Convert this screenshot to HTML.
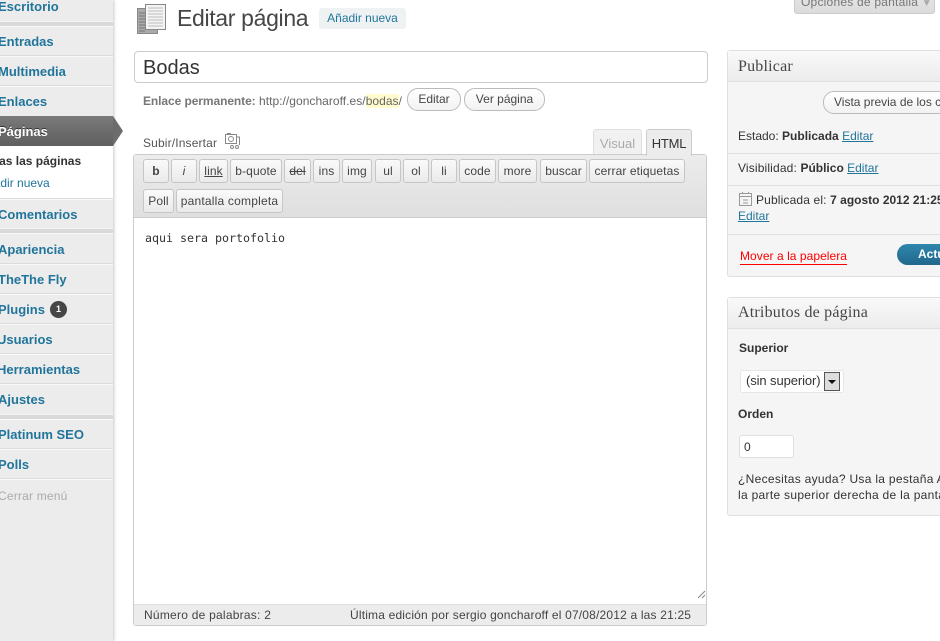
<!DOCTYPE html>
<html><head><meta charset="utf-8"><style>
*{box-sizing:border-box}
html,body{margin:0;padding:0;width:940px;height:641px;overflow:hidden;background:#fff;font:12px "Liberation Sans",sans-serif;color:#333}
.a{position:absolute;white-space:nowrap}
#side{left:0;top:0;width:113px;height:641px;background:#ececec;box-shadow:1px 0 3px rgba(0,0,0,.22)}
.m{position:absolute;left:-2px;font:bold 13px/16px "Liberation Sans",sans-serif;color:#21759b;white-space:nowrap}
.l{position:absolute;left:0;width:113px;height:2px;background:linear-gradient(#dcdcdc 50%,#f9f9f9 50%)}
.s{position:absolute;left:0;width:113px;height:6px;background:#d9d9d9;border-top:1px solid #f5f5f5;border-bottom:1px solid #f9f9f9}
.b{position:absolute;height:24px;top:0;background:linear-gradient(#fafafa,#eaeaea);border:1px solid #c6c6c6;border-radius:3px;font:12px/22px "Liberation Sans",sans-serif;letter-spacing:.1px;text-align:center;color:#444}
.pill{position:absolute;height:23px;border:1px solid #bbb;border-radius:11px;background:linear-gradient(#fff,#f2f2f2);font:12px/21px "Liberation Sans",sans-serif;text-align:center;color:#464646;white-space:nowrap}
a{color:#21759b;text-decoration:underline}
.box{position:absolute;left:727px;width:230px;background:#f5f5f5;border:1px solid #dfdfdf;border-radius:3px}
.hd{position:absolute;left:0;top:0;width:100%;height:30px;background:linear-gradient(#f9f9f9,#ececec);border-bottom:1px solid #dfdfdf;font:16px/31px "Liberation Serif",serif;letter-spacing:.2px;padding-left:10px;color:#464646}
.hr{position:absolute;left:0;width:100%;height:1px;background:#dfdfdf}
</style></head><body>

<div class="a" id="side"></div>
<div class="m" style="top:-1px">Escritorio</div>
<div class="s" style="top:21px"></div>
<div class="m" style="top:34px">Entradas</div>
<div class="l" style="top:55px"></div>
<div class="m" style="top:64px">Multimedia</div>
<div class="l" style="top:85px"></div>
<div class="m" style="top:94px">Enlaces</div>
<div class="a" style="left:0;top:146px;width:113px;height:52px;background:#fff"></div>
<div class="a" style="left:0;top:116px;width:113px;height:30px;background:linear-gradient(#7a7a7a,#5f5f5f)"></div>
<svg class="a" style="left:113px;top:116px" width="10" height="30"><path d="M0 0L10 15L0 30Z" fill="#6c6c6c"/></svg>
<div class="m" style="top:124px;color:#fff;text-shadow:0 -1px 0 #333">Páginas</div>
<div class="a" style="left:-22px;top:153px;font:bold 12px/16px 'Liberation Sans',sans-serif;color:#333">Todas las páginas</div>
<div class="a" style="left:-21px;top:175px;font:12px/16px 'Liberation Sans',sans-serif;color:#21759b">Añadir nueva</div>
<div class="l" style="top:198px"></div>
<div class="m" style="top:207px">Comentarios</div>
<div class="s" style="top:228px"></div>
<div class="m" style="top:242px">Apariencia</div>
<div class="l" style="top:263px"></div>
<div class="m" style="top:272px">TheThe Fly</div>
<div class="l" style="top:293px"></div>
<div class="m" style="top:302px">Plugins</div>
<div class="a" style="left:50px;top:301px;width:17px;height:17px;border-radius:50%;background:#464646;color:#fff;font:bold 9px/17px 'Liberation Sans',sans-serif;text-align:center">1</div>
<div class="l" style="top:323px"></div>
<div class="m" style="top:332px;left:-3px">Usuarios</div>
<div class="l" style="top:353px"></div>
<div class="m" style="top:362px;left:-3px">Herramientas</div>
<div class="l" style="top:383px"></div>
<div class="m" style="top:392px">Ajustes</div>
<div class="s" style="top:414px"></div>
<div class="m" style="top:427px">Platinum SEO</div>
<div class="l" style="top:448px"></div>
<div class="m" style="top:457px">Polls</div>
<div class="l" style="top:478px"></div>
<div class="a" style="left:-2px;top:488px;font:12px/16px 'Liberation Sans',sans-serif;letter-spacing:.2px;color:#aaa">Cerrar menú</div>

<svg class="a" style="left:136px;top:3px" width="34" height="33">
<rect x="1.500" y="5.500" width="20" height="25" fill="#aaa" stroke="#888"/>
<g stroke="#777"><path d="M3 10H9M3 13H9M3 16H9M3 19H9M3 22H9M3 25H9M3 28H9"/></g>
<rect x="9.500" y="1.500" width="20" height="25" fill="#f4f4f4" stroke="#888"/>
<g stroke="#bbb"><path d="M12 5H27M12 8H27M12 11H27M12 14H27M12 17H27M12 20H27M12 23H27"/></g>
</svg>
<div class="a" style="left:177px;top:3px;font:23px/30px 'Liberation Sans',sans-serif;letter-spacing:-.33px;color:#464646">Editar página</div>
<div class="a" style="left:319px;top:8px;width:87px;height:21px;background:#eef2f3;border-radius:3px;font:12px/21px 'Liberation Sans',sans-serif;color:#21759b;text-align:center">Añadir nueva</div>
<div class="a" style="left:794px;top:-10px;width:141px;height:24px;background:linear-gradient(#e6e6e6,#dcdcdc);border:1px solid #ccc;border-radius:3px;font:12px/22px 'Liberation Sans',sans-serif;letter-spacing:.22px;color:#777;padding-left:6px">Opciones de pantalla <span style="color:#aaa;font-size:10px">▼</span></div>

<div class="a" style="left:134px;top:51px;width:574px;height:32px;background:#fff;border:1px solid #ccc;border-radius:4px;font:20px/32px 'Liberation Sans',sans-serif;color:#333;padding-left:8px">Bodas</div>
<div class="a" style="left:143px;top:93px;font:12px/16px 'Liberation Sans',sans-serif;letter-spacing:.04px;color:#666"><b style="color:#777;letter-spacing:-.08px">Enlace permanente:</b> http://goncharoff.es/<span style="background:#fffbcc">bodas</span>/</div>
<div class="pill" style="left:407px;top:88px;width:54px">Editar</div>
<div class="pill" style="left:464px;top:88px;width:81px">Ver página</div>

<div class="a" style="left:143px;top:135px;font:12px/16px 'Liberation Sans',sans-serif;letter-spacing:.15px;color:#555">Subir/Insertar</div>
<svg class="a" style="left:224px;top:132px" width="17" height="18" fill="none" stroke="#888">
<rect x="1.500" y="2.500" width="11" height="9"/><circle cx="7" cy="7" r="2.500"/><path d="M3 1.500H7M12.500 5H15.500V13"/><circle cx="8" cy="15" r="1.500"/><circle cx="13" cy="15" r="1.500"/>
</svg>

<div class="a" style="left:593px;top:129px;width:49px;height:26px;background:#f1f1f1;border:1px solid #dfdfdf;border-bottom:0;border-radius:3px 3px 0 0;font:13px/27px 'Liberation Sans',sans-serif;color:#aaa;text-align:center">Visual</div>
<div class="a" style="left:646px;top:129px;width:46px;height:27px;background:#ececec;border:1px solid #ccc;border-bottom:0;border-radius:3px 3px 0 0;font:13px/27px 'Liberation Sans',sans-serif;letter-spacing:-.2px;color:#333;text-align:center;z-index:2">HTML</div>

<div class="a" style="left:133px;top:154px;width:574px;height:472px;background:#fff;border:1px solid #ccc;border-radius:3px"></div>
<div class="a" style="left:134px;top:155px;width:572px;height:63px;background:linear-gradient(#ececec,#dfdfdf);border-bottom:1px solid #ccc;border-radius:3px 3px 0 0"></div>
<div class="a" style="left:0;top:159px;width:0;height:0">
<div class="b" style="left:143px;width:26px"><b>b</b></div>
<div class="b" style="left:171px;width:26px"><i>i</i></div>
<div class="b" style="left:199px;width:29px"><u>link</u></div>
<div class="b" style="left:230px;width:52px">b-quote</div>
<div class="b" style="left:284px;width:27px"><s>del</s></div>
<div class="b" style="left:313px;width:27px">ins</div>
<div class="b" style="left:342px;width:30px">img</div>
<div class="b" style="left:375px;width:26px">ul</div>
<div class="b" style="left:403px;width:26px">ol</div>
<div class="b" style="left:431px;width:26px">li</div>
<div class="b" style="left:459px;width:37px">code</div>
<div class="b" style="left:498px;width:39px">more</div>
<div class="b" style="left:540px;width:47px">buscar</div>
<div class="b" style="left:589px;width:96px">cerrar etiquetas</div>
<div class="b" style="left:143px;top:30px;width:31px">Poll</div>
<div class="b" style="left:176px;top:30px;width:107px;letter-spacing:.2px">pantalla completa</div>
</div>
<div class="a" style="left:145px;top:231px;font:11.630px/14px 'DejaVu Sans Mono',monospace;color:#333">aqui sera portofolio</div>
<svg class="a" style="left:697px;top:590px" width="9" height="9" stroke="#888"><path d="M1 8L8 1M5 8L8 5"/></svg>
<div class="a" style="left:134px;top:604px;width:572px;height:21px;background:#ececec;border-top:1px solid #dfdfdf;border-radius:0 0 3px 3px"></div>
<div class="a" style="left:144px;top:607px;font:12px/16px 'Liberation Sans',sans-serif;letter-spacing:.24px;color:#444">Número de palabras: 2</div>
<div class="a" style="left:350px;top:607px;font:12px/16px 'Liberation Sans',sans-serif;letter-spacing:.18px;color:#444">Última edición por sergio goncharoff el 07/08/2012 a las 21:25</div>

<div class="box" style="top:50px;height:227px">
<div class="hd" style="height:31px">Publicar</div>
<div class="pill" style="left:95px;top:40px;width:160px;text-align:left;padding-left:10px">Vista previa de los cambios</div>
<div class="a" style="left:10px;top:78px">Estado: <b>Publicada</b> <a>Editar</a></div>
<div class="hr" style="top:102px"></div>
<div class="a" style="left:10px;top:110px"><span style="letter-spacing:.15px">Visibilidad: </span><b>Público</b> <a>Editar</a></div>
<div class="hr" style="top:134px"></div>
<svg class="a" style="left:11px;top:141px" width="13" height="14" fill="#f5f5f5" stroke="#999"><rect x=".5" y="1.500" width="12" height="12"/><path d="M.5 4.500H12.500M3.500 0V2M9.500 0V2M4 8H9M4 11H9"/></svg>
<div class="a" style="left:28px;top:142px"><span style="letter-spacing:.15px">Publicada el: </span><b>7 agosto 2012 21:25</b></div>
<div class="a" style="left:10px;top:158px"><a>Editar</a></div>
<div class="hr" style="top:183px"></div>
<div class="a" style="left:12px;top:198px;color:#f00;border-bottom:1px solid #f00;padding-bottom:0;line-height:15px;letter-spacing:.05px">Mover a la papelera</div>
<div class="a" style="left:169px;top:193px;width:80px;height:21px;border-radius:11px;background:linear-gradient(#2f86ad,#21688c);color:#fff;font:bold 12px/21px 'Liberation Sans',sans-serif;padding-left:21px">Actualizar</div>
</div>

<div class="box" style="top:297px;height:219px">
<div class="hd" style="height:31px;line-height:29px">Atributos de página</div>
<div class="a" style="left:11px;top:43px"><b>Superior</b></div>
<div class="a" style="left:12px;top:72px;width:104px;height:23px;background:#fff;border:1px solid #e6e6e6;border-radius:3px;font:13px/20px 'Liberation Sans',sans-serif;letter-spacing:-.1px;padding-left:5px">(sin superior)</div>
<svg class="a" style="left:96px;top:74px" width="16" height="19"><rect x=".5" y=".5" width="15" height="18" fill="#ddd" stroke="#555"/><path d="M4 8H12L8 12Z" fill="#111"/></svg>
<div class="a" style="left:10px;top:109px"><b>Orden</b></div>
<div class="a" style="left:11px;top:137px;width:55px;height:23px;background:#fff;border:1px solid #dfdfdf;border-radius:3px;font:12px/22px 'Liberation Sans',sans-serif;padding-left:4px">0</div>
<div class="a" style="left:10px;top:173px;line-height:16px;letter-spacing:.3px">¿Necesitas ayuda? Usa la pestaña Ayuda en<br>la parte superior derecha de la pantalla.</div>
</div>

</body></html>
